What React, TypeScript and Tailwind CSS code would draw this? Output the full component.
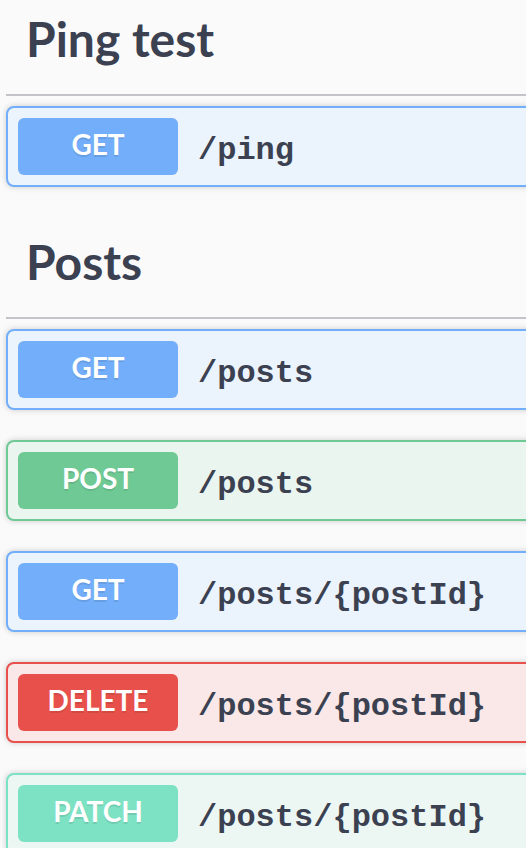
import React from "react";

type Op = { method: string; path: string; badge: string; border: string; bg: string };

const pingOps: Op[] = [
  { method: "GET", path: "/ping", badge: "bg-[#72aef9]", border: "border-[#72aef9]", bg: "bg-[#ebf3fc]" },
];

const postOps: Op[] = [
  { method: "GET", path: "/posts", badge: "bg-[#72aef9]", border: "border-[#72aef9]", bg: "bg-[#ebf3fc]" },
  { method: "POST", path: "/posts", badge: "bg-[#6fc994]", border: "border-[#6fc994]", bg: "bg-[#ebf5ef]" },
  { method: "GET", path: "/posts/{postId}", badge: "bg-[#72aef9]", border: "border-[#72aef9]", bg: "bg-[#ebf3fc]" },
  { method: "DELETE", path: "/posts/{postId}", badge: "bg-[#e8504b]", border: "border-[#e8504b]", bg: "bg-[#f9e8e7]" },
  { method: "PATCH", path: "/posts/{postId}", badge: "bg-[#7de2c4]", border: "border-[#7de2c4]", bg: "bg-[#ecf7f4]" },
];

function Block({ op }: { op: Op }) {
  return (
    <div
      className={`mb-[30px] flex items-center rounded-[8px] border-2 p-[10px] shadow-[0_0_6px_rgba(0,0,0,0.19)] ${op.border} ${op.bg}`}
    >
      <div
        className={`flex h-[57px] w-[160px] shrink-0 items-center justify-center rounded-[6px] ${op.badge}`}
      >
        <span
          className="pb-[6px] text-[28px] font-bold leading-none text-white [text-shadow:0_2px_0_rgba(0,0,0,0.1)]"
          style={{ fontFamily: "Lato, 'Open Sans', sans-serif" }}
        >
          {op.method}
        </span>
      </div>
      <span
        className="px-[20px] pt-[8px] text-[32px] font-bold text-[#3b4151]"
        style={{ fontFamily: "'Liberation Mono', 'DejaVu Sans Mono', monospace" }}
      >
        {op.path}
      </span>
    </div>
  );
}

function Section({ title, ops }: { title: string; ops: Op[] }) {
  return (
    <div>
      <h3
        className="mb-[10px] border-b-2 border-[#c3c4c9] pt-[14px] pb-[24px] pl-[20px] text-[48px] font-bold leading-[62px] text-[#3b4151]"
        style={{ fontFamily: "Lato, 'Open Sans', sans-serif" }}
      >
        {title}
      </h3>
      {ops.map((op, i) => (
        <Block key={i} op={op} />
      ))}
    </div>
  );
}

export default function App() {
  return (
    <div className="h-[848px] w-[526px] overflow-hidden bg-[#fafafa]">
      <div className="-mt-[6px] ml-[6px] w-[800px]">
        <Section title="Ping test" ops={pingOps} />
        <Section title="Posts" ops={postOps} />
      </div>
    </div>
  );
}
